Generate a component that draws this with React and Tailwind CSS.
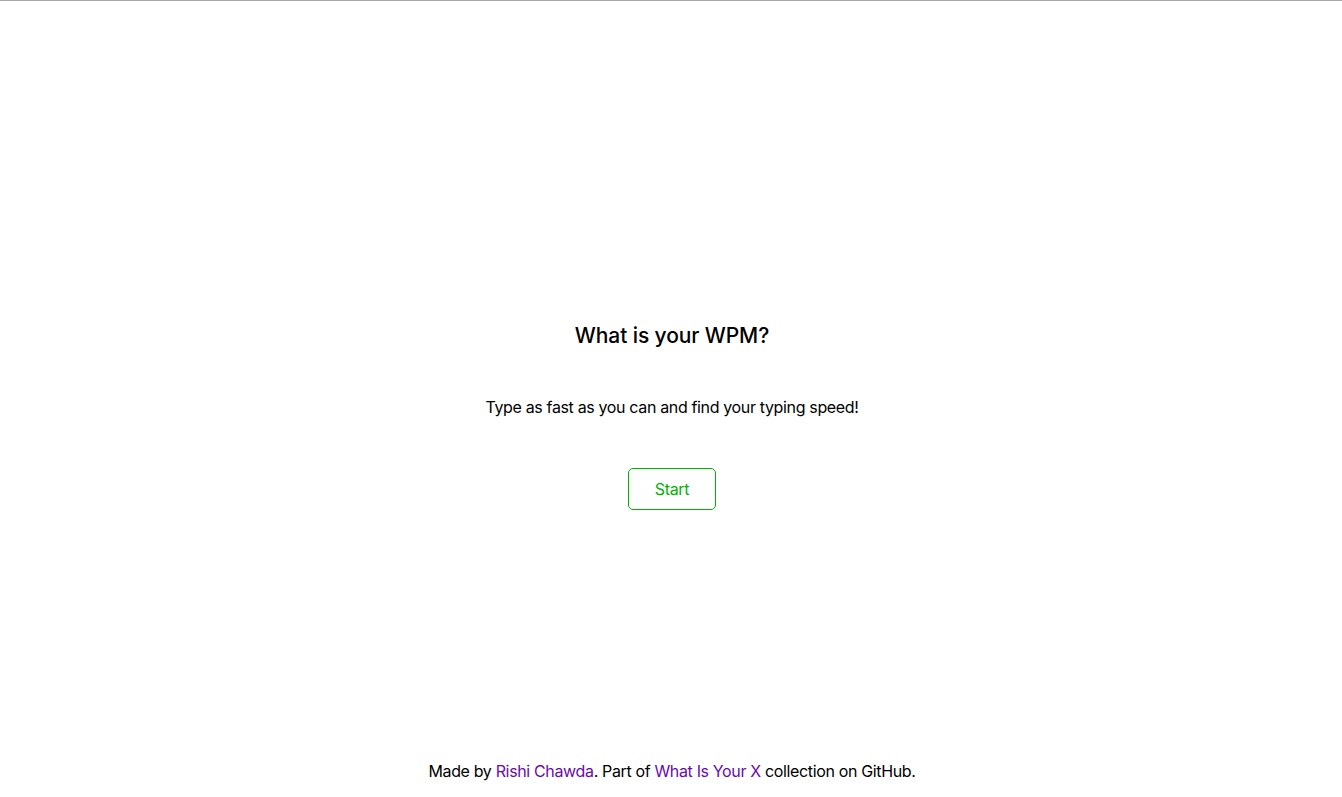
export default function App() {
  return (
    <div className="flex h-screen flex-col border-t border-[#a9a9a9] bg-white pl-[2px] text-black font-['Inter','Liberation_Sans',sans-serif]">
      <main className="flex flex-1 flex-col items-center justify-center pt-[73px]">
        <h1 className="mt-[1px] text-[21px] leading-[24px] font-medium tracking-[-0.005em]">What is your WPM?</h1>
        <p className="mt-[47px] text-[16px] leading-[24px] tracking-[-0.022em]">Type as fast as you can and find your typing speed!</p>
        <button className="mt-[49px] flex h-[42px] w-[88px] items-center justify-center rounded-[5px] border border-[#00b300] text-[16px] tracking-[-0.02em] text-[#00b300]">
          Start
        </button>
      </main>
      <footer className="pb-[14px] text-center text-[16px] leading-[24px] tracking-[-0.022em]">
        Made by <a className="text-[#6a0aa8]" href="#">Rishi Chawda</a>. Part of{' '}
        <a className="text-[#6a0aa8]" href="#">What Is Your X</a> collection on GitHub.
      </footer>
    </div>
  );
}
